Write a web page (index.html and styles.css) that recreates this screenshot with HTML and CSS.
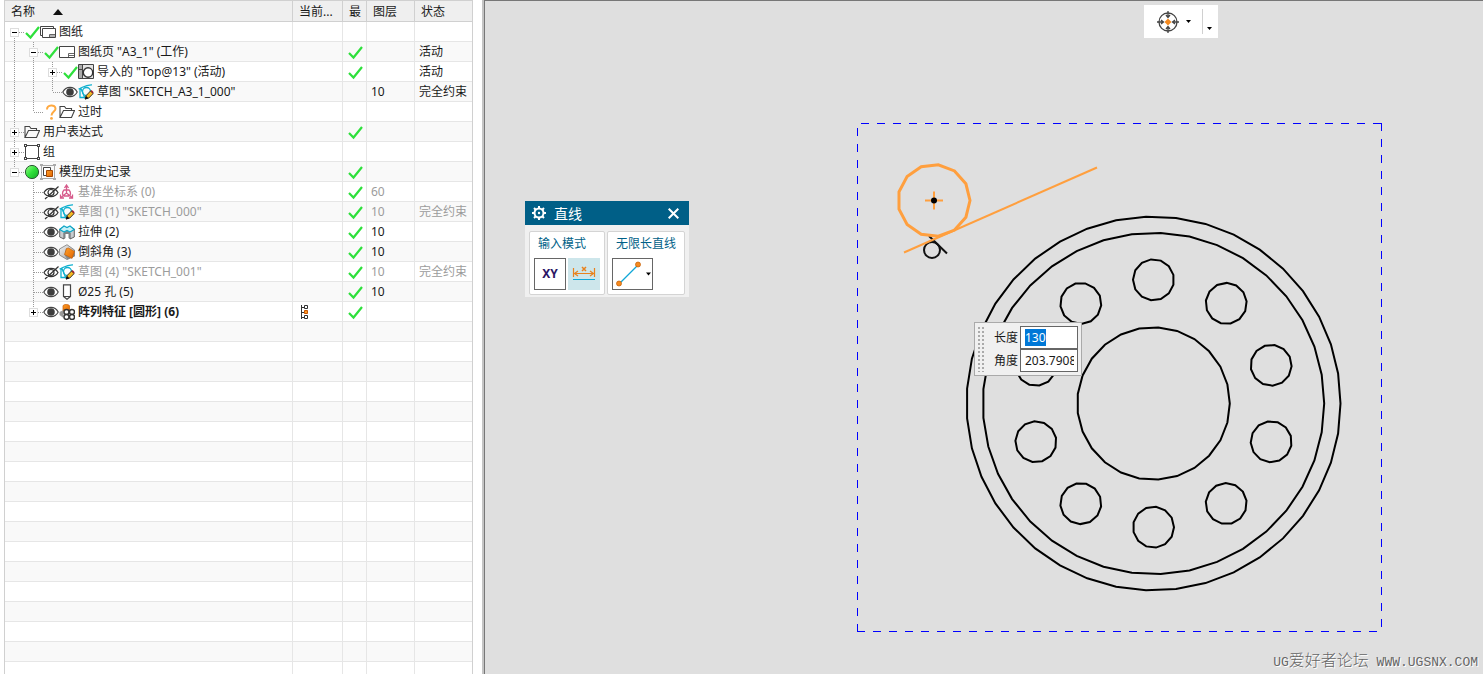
FILE: index.html
```html
<!DOCTYPE html>
<html lang="zh-CN">
<head>
<meta charset="utf-8">
<title>图纸</title>
<link rel="stylesheet" href="styles.css">
</head>
<body>
<svg class="defs" aria-hidden="true">
  <defs>
    <linearGradient id="gBall" x1="0" y1="0" x2="1" y2="1"><stop offset="0" stop-color="#9dff8c"/><stop offset=".5" stop-color="#2fe03a"/><stop offset="1" stop-color="#14a824"/></linearGradient>
    <linearGradient id="gOr" x1="0" y1="0" x2="1" y2="1"><stop offset="0" stop-color="#ffa02a"/><stop offset="1" stop-color="#e06400"/></linearGradient>
    <linearGradient id="gGr" x1="0" y1="0" x2="1" y2="1"><stop offset="0" stop-color="#f4f4f4"/><stop offset="1" stop-color="#9a9a9a"/></linearGradient>
  </defs>
  <symbol id="check" viewBox="0 0 16 16"><path d="M2 9l4.500 4.500L15 3" fill="none" stroke="#2ee03c" stroke-width="2.200"/></symbol>
  <symbol id="sheets" viewBox="0 0 16 16"><path d="M3 11.500H.5V2.500H13.500V4.500" fill="none" stroke="#444"/><path d="M2.500 4.500H15.500V13.500H2.500z" fill="#fff" stroke="#444"/><path d="M9.500 13V10.500H15M9.500 12H15" fill="none" stroke="#666"/></symbol>
  <symbol id="sheet" viewBox="0 0 16 16"><path d="M.5 2.500H15.500V13.500H.5z" fill="#fff" stroke="#444"/><path d="M9.500 13V9.500H15M9.500 11.500H15" fill="none" stroke="#666"/></symbol>
  <symbol id="view" viewBox="0 0 16 16"><path d="M.5 .5H15.500V14.500H.5z" fill="#e4e4e4" stroke="#444"/><path d="M1 1h3v13H1z" fill="#aaa"/><path d="M4.500 .5v14M1 5.500h3" stroke="#444"/><circle cx="10" cy="8.500" r="4.700" fill="#fff" stroke="#333" stroke-width="1.400"/></symbol>
  <symbol id="sketch" viewBox="0 0 16 16"><path d="M.5 5C4 4 7 .5 14 .8M2 4.500v9H9M2.500 3.500L6.500 13" fill="none" stroke="#0fb0cf" stroke-width="1.300"/><circle cx="8.500" cy="7.500" r="4" fill="none" stroke="#0fb0cf" stroke-width="1.300"/><path d="M7 15L8.200 11.500 12.500 7 15.200 9.500 10.800 14z" fill="#f6b821" stroke="#222" stroke-width=".9"/><path d="M7 15.500l1-3.500 2.500 2.300z" fill="#111"/><path d="M12.500 7l1-1 2.200 2.200-1 1.300z" fill="#9b1d2d"/></symbol>
  <symbol id="eye" viewBox="0 0 16 16"><path d="M.8 8C4 1.800 12 1.800 15.200 8 12 14.200 4 14.200 .8 8z" fill="#fff" stroke="#444" stroke-width="1.100"/><circle cx="8" cy="8" r="3.800" fill="#3d3d3d"/></symbol>
  <symbol id="hidden" viewBox="0 0 16 16"><path d="M1 8.500C4 3 12 3 15 8.500 12 14 4 14 1 8.500zM2 15L15.500 2.500" fill="none" stroke="#333" stroke-width="1.200"/><circle cx="8" cy="8.500" r="3" fill="none" stroke="#333" stroke-width="1.200"/></symbol>
  <symbol id="question" viewBox="0 0 16 16"><path d="M4 5.500C4 .2 12.500 .2 12.500 4.700 12.500 7.500 8.500 7.500 8.500 11.500" fill="none" stroke="#ffa940" stroke-width="2"/><circle cx="8.500" cy="14.400" r="1.400" fill="#ffa940"/></symbol>
  <symbol id="folder" viewBox="0 0 16 16"><path d="M1 13.500V2.500H5.500L7 4.500H12.500V6.500M1 13.500L4.500 6.500H15.500L12.500 13.500z" fill="none" stroke="#444" stroke-width="1.100"/></symbol>
  <symbol id="group" viewBox="0 0 16 16"><path d="M1.500 1.500h13v13h-13z" fill="none" stroke="#444"/><path d="M0 0h3v3H0zM13 0h3v3h-3zM0 13h3v3H0zM13 13h3v3h-3z" fill="#444"/><path d="M1 1h1v1H1zM14 1h1v1h-1zM1 14h1v1H1zM14 14h1v1h-1z" fill="#fff"/></symbol>
  <symbol id="ball" viewBox="0 0 16 16"><circle cx="8" cy="8" r="6.600" fill="url(#gBall)" stroke="#2c5a35"/></symbol>
  <symbol id="history" viewBox="0 0 16 16"><path d="M1.500 1.500h13v13h-13z" fill="none" stroke="#aaa"/><path d="M0 0h3v2H0zM13 0h3v2h-3zM0 14h3v2H0zM13 14h3v2h-3z" fill="#aaa"/><path d="M3.500 3.500h7v8h-7z" fill="#fff" stroke="#444"/><path d="M6.500 6.500h6v6h-6z" fill="url(#gOr)" stroke="#a84800"/></symbol>
  <symbol id="csys" viewBox="0 0 16 16"><path d="M7.500 1v8L2 13.500M7.500 9L13 13.500M5.500 4l2-3 2 3M1.500 10.500V14H5M10 14h3.500v-3.500M5 6c-2 2-2 5 0 6h5c2-1 2-4 0-6z" fill="none" stroke="#d65a8a" stroke-width="1.300"/></symbol>
  <symbol id="extrude" viewBox="0 0 16 16"><path d="M.7 5L5 3l3 1 3-1 4.300 2v8L11 15V9L8 8 5 9v6L.7 13z" fill="#c9cdd0" stroke="#555" stroke-width=".9"/><path d="M5 8.500l3-1.500 3 1.500V15l-1.500-1V10H6.500v4L5 15z" fill="#7f8588"/><path d="M.7 5.500L5 2l3 1.500L11 2l4.300 3.500L11 8 8 6.500 5 8z" fill="#c8f2f8" stroke="#10a7c7" stroke-width="1.300"/></symbol>
  <symbol id="chamfer" viewBox="0 0 16 16"><path d="M.5 5L8 .7l7.500 5.300v6L8 15.500.5 11z" fill="url(#gGr)" stroke="#777" stroke-width=".8"/><path d="M7 4.500L15.500 8v4.500L8.500 15.500 5.500 11z" fill="#888"/><path d="M7.500 4.500L9.500 4l6 3.500-2.500 7L5.500 10.500z" fill="url(#gOr)" stroke="#c35a00" stroke-width=".6"/></symbol>
  <symbol id="hole" viewBox="0 0 16 16"><path d="M4.500 .8h7V12.500L8 15.300 4.500 12.500zM4.500 12.500h7" fill="#fff" stroke="#444" stroke-width="1.200"/></symbol>
  <symbol id="pattern" viewBox="0 0 16 16"><path d="M4 2C4 0 10.500 0 10.500 2V7H4z" fill="url(#gOr)" stroke="#c35a00" stroke-width=".7"/><path d="M.5 8l4-2v8l-4-3z" fill="#999"/><g fill="#fff" stroke="#333" stroke-width="1.400"><circle cx="7.500" cy="8" r="2.500"/><circle cx="13" cy="8" r="2.500"/><circle cx="7.500" cy="13" r="2.500"/><circle cx="13" cy="13" r="2.500"/></g></symbol>
  <symbol id="branch" viewBox="0 0 16 16"><path d="M4.500 1v14M4 3.500h3M4 8.500h3M4 13.500h3" fill="none" stroke="#333"/><path d="M7.500 1.500h3v3h-3zM7.500 11.500h3v3h-3z" fill="#fff" stroke="#333"/><path d="M7.500 6.500h3v3h-3z" fill="#ff9a20" stroke="#c75300"/></symbol>
</svg>

<main class="app">
  <section class="navigator">
    <table class="tree">
      <colgroup><col><col class="c-current"><col class="c-latest"><col class="c-layer"><col class="c-state"></colgroup>
      <thead><tr><th>名称<svg class="sort" viewBox="0 0 10 6"><path d="M5 0l5 6H0z" fill="#111"/></svg></th><th>当前...</th><th>最</th><th>图层</th><th>状态</th></tr></thead>
      <tbody id="rows"></tbody>
    </table>
  </section>

  <section class="canvas">
    <svg class="drawing" width="998" height="673" aria-label="草图">
      <g class="frame"><path d="M376 122.500H897"/><path d="M372.500 127V630"/><path d="M896.500 122V630"/><path d="M372 630.500H897"/></g>
      <g id="plate" class="edges"></g>
      <g class="tangent"><circle cx="447" cy="249" r="8"/><path d="M444 235L462 252.500"/></g>
      <g id="active" class="active"><path d="M419 251.500L612 166.500"/><path d="M440 199.500h18M449 190.500v18"/></g>
      <circle cx="449" cy="199.500" r="3"/>
    </svg>

    <div class="snapbar">
      <button class="snap" aria-label="捕捉点">
        <svg width="24" height="24" viewBox="0 0 24 24"><g fill="none" stroke="#444" stroke-width="1.300"><circle cx="12" cy="12" r="9"/><path d="M12 1v6.500M12 16.500V23M1 12h6.500M16.500 12H23M10 5l2 2.500L14 5M10 19l2-2.500 2 2.500M5 10l2.500 2L5 14M19 10l-2.500 2 2.500 2"/></g><path d="M12 8.500l3.500 3.500-3.500 3.500L8.500 12z" fill="#f58a1f"/></svg>
        <svg width="5" height="3" viewBox="0 0 5 3"><path d="M0 0h5L2.500 3z"/></svg>
      </button>
      <button class="more" aria-label="更多"><svg width="5" height="3" viewBox="0 0 5 3"><path d="M0 0h5L2.500 3z"/></svg></button>
    </div>

    <div class="dialog">
      <header class="dialog-head">
        <svg width="14" height="14" viewBox="0 0 14 14"><circle cx="7" cy="7" r="4.500" fill="none" stroke="#fff" stroke-width="2"/><circle cx="7" cy="7" r="1.200" fill="#fff"/><path d="M7 0v2M7 12v2M0 7h2M12 7h2M2 2l1.500 1.500M10.500 10.500L12 12M2 12l1.500-1.500M10.500 3.500L12 2" stroke="#fff" stroke-width="2"/></svg>
        <span>直线</span>
        <button class="close" aria-label="关闭"><svg width="11" height="11" viewBox="0 0 11 11"><path d="M.7.700l9.600 9.600M10.300.700L.7 10.300" stroke="#fff" stroke-width="2"/></svg></button>
      </header>
      <div class="dialog-body">
        <div class="box"><h2>输入模式</h2>
          <div class="tools">
            <button class="tool xy">XY</button>
            <button class="tool on" aria-label="参数模式"><svg width="24" height="16" viewBox="0 0 24 16"><path d="M1.500 2v9M22.500 2v9M2 7.500h20M6 5L2.500 7.500 6 10M18 5l3.500 2.500L18 10" fill="none" stroke="#e8821e" stroke-width="1.200"/><path d="M10 1l4 4M14 1l-4 4" stroke="#e8821e" stroke-width="1.500"/><path d="M1 13.500h22" stroke="#10a7d7"/></svg></button>
          </div>
        </div>
        <div class="box"><h2>无限长直线</h2>
          <div class="tools">
            <button class="tool wide" aria-label="直线"><svg width="38" height="28" viewBox="0 0 38 28"><path d="M5 24L24 5" stroke="#10a7d7" stroke-width="1.300"/><circle cx="5" cy="23.500" r="2.500" fill="#f58a1f" stroke="#c35a00" stroke-width=".7"/><circle cx="24" cy="4.500" r="2.500" fill="#f58a1f" stroke="#c35a00" stroke-width=".7"/><path d="M32 12.500h5L34.500 15.500z"/></svg></button>
          </div>
        </div>
      </div>
    </div>

    <form class="dims">
      <span class="grip"></span>
      <label for="len">长度</label><input id="len" value="130">
      <label for="ang">角度</label><input id="ang" value="203.7908">
    </form>

    <div class="mark"><span class="mono">UG</span>爱好者论坛<span class="mono"> WWW.UGSNX.COM</span></div>
  </section>
</main>
<script src="app.js"></script>
</body>
</html>
```
FILE: styles.css
```css
* { box-sizing: border-box; }
body { margin: 0; background: #fff; color: #1a1a1a; font: 12px/16px "Noto Sans", "Noto Sans CJK SC", sans-serif; }
button, input { font: inherit; color: inherit; margin: 0; padding: 0; border-radius: 0; }
button { border: 0; background: none; }
svg { display: block; flex: none; }
.defs { position: absolute; width: 0; height: 0; }
.app { display: flex; height: 100vh; overflow: hidden; }

.navigator { flex: 0 0 469px; margin: 0 9px 0 4px; overflow: hidden; border: solid #d0d0d0; border-width: 0 1px; }
.tree { width: 100%; table-layout: fixed; border-collapse: separate; border-spacing: 0; }
.c-current { width: 50px; }
.c-latest { width: 24px; }
.c-layer { width: 48px; }
.c-state { width: 57px; }
th { height: 22px; padding: 2px 0 0 6px; background: #efefef; border: solid #d0d0d0; border-width: 1px 1px 1px 0; font-weight: 400; text-align: left; white-space: nowrap; overflow: hidden; }
th:last-child, td:last-child { border-right: 0; }
td { height: 20px; padding: 0 0 0 4px; border: solid #e6e6e6; border-width: 0 1px 1px 0; white-space: nowrap; }
td:first-child { padding: 0; }
tr:nth-child(even) td { background: #f9f9f9; }
.sort { display: inline-block; width: 10px; height: 6px; margin-left: 18px; vertical-align: 1px; }
.name { display: flex; align-items: center; height: 19px; }
.text { margin-left: 3px; }
.bold .text { font-weight: 700; }
.dim { color: #9c9c9c; }
.guide { position: relative; flex: 0 0 19px; height: 20px; }
.guide path { stroke: #999; stroke-dasharray: 1 1; fill: none; }
.toggle { position: absolute; left: 5px; top: 6px; width: 9px; height: 9px; background: #fff; border: 1px solid #ddd; display: grid; place-items: center; }
.toggle path { stroke: #000; stroke-dasharray: none; }

.canvas { position: relative; flex: 1; min-width: 0; background: #dfdfdf; border: solid #777; border-width: 1px 0 0 1px; box-shadow: -2px 0 #c4c4c4; margin-left: 2px; overflow: hidden; }
.drawing { position: absolute; left: 0; top: 0; overflow: visible; }
.frame path { stroke: #00f; stroke-dasharray: 8 8; }
.edges { fill: none; stroke: #000; stroke-width: 2; }
.active { fill: none; stroke: #ff9f3e; stroke-width: 2; }
.active polygon { stroke-width: 3; }
.tangent { fill: none; stroke: #111; stroke-width: 2; }

.snapbar { position: absolute; left: 659px; top: 4px; display: flex; height: 33px; padding: 4px 0; background: #fff; }
.snap { display: flex; align-items: center; gap: 6px; padding: 0 11px 0 12px; border-right: 1px solid #d0d0d0; }
.more { display: flex; align-items: flex-end; padding: 0 6px 4px 4px; }

.dialog { position: absolute; left: 40px; top: 200px; width: 164px; background: #f0f0f0; }
.dialog-head { display: flex; align-items: center; gap: 8px; height: 24px; padding: 0 10px 0 7px; background: #005f87; color: #fff; font-size: 14px; }
.dialog-head span { padding-top: 2px; }
.close { margin-left: auto; }
.dialog-body { display: flex; gap: 2px; padding: 6px 4px 2px; }
.box { flex: 1 0 auto; padding: 4px; background: #fff; border: 1px solid #d4d4d4; border-radius: 2px; }
.box h2 { margin: 0 0 6px; padding: 0 4px; font-size: 12px; line-height: 16px; font-weight: 400; color: #005f87; }
.tools { display: flex; gap: 2px; }
.tool { display: grid; place-items: center; width: 32px; height: 32px; border: 1px solid #666; background: #fff; }
.xy { color: #2b1464; font-weight: 700; }
.on { border: 0; background: #cde6eb; }
.wide { width: 41px; }

.dims { position: absolute; left: 489px; top: 321px; display: grid; grid-template-columns: 8px 27px 58px; column-gap: 4px; align-items: center; padding: 3px 3px 3px 2px; background: #f0f0f0; border: 1px solid #aaa; }
.grip { grid-row: 1 / 3; align-self: stretch; background: radial-gradient(circle, #aaa 1px, transparent 1px) 0 0 / 4px 4px; }
.dims label { text-align: right; margin-right: -2px; }
.dims input { width: 58px; height: 23px; padding: 0 3px 0 4px; border: 1px solid #666; background: #fff; outline: 0; }
.dims input::selection { background: #0078d7; color: #fff; }

.mark { position: absolute; right: 5px; bottom: 2px; font-size: 16px; line-height: 18px; color: #666; font-weight: 300; text-shadow: 1px 1px #fff; white-space: pre; }
.mono { font-family: "Liberation Mono", monospace; font-size: 13px; }
```
FILE: app.js
```js
const rows = [
  [["f-"], "check sheets", "图纸"],
  [["v", "t-"], "check sheet", '图纸页 "A3_1" (工作)', 1, "", "活动"],
  [["v", "v", "t+"], "check view", '导入的 "Top@13" (活动)', 1, "", "活动"],
  [["v", "v", "l"], "eye sketch", '草图 "SKETCH_A3_1_000"', 0, "10", "完全约束"],
  [["v", "l"], "question folder", "过时"],
  [["t+"], "folder", "用户表达式", 1],
  [["t+"], "group", "组"],
  [["l-"], "ball history", "模型历史记录", 1],
  [["", "t"], "hidden csys", "基准坐标系 (0)", 1, "60", "", "dim"],
  [["", "t"], "hidden sketch", '草图 (1) "SKETCH_000"', 1, "10", "完全约束", "dim"],
  [["", "t"], "eye extrude", "拉伸 (2)", 1, "10"],
  [["", "t"], "eye chamfer", "倒斜角 (3)", 1, "10"],
  [["", "t"], "hidden sketch", '草图 (4) "SKETCH_001"', 1, "10", "完全约束", "dim"],
  [["", "t"], "eye hole", "Ø25 孔 (5)", 1, "10"],
  [["", "l+"], "eye pattern", "阵列特征 [圆形] (6)", 1, "", "", "bold"]
];
const lines = { f: "M9.5 10V20M10 10.500H19", v: "M9.500 0V20", t: "M9.500 0V20M10 10.500H19", l: "M9.500 0V10M10 10.500H19" };
const icon = id => `<svg width="16" height="16"><use href="#${id}"/></svg>`;
const guide = g => {
  const line = g ? `<svg width="19" height="20"><path d="${lines[g[0]]}"/></svg>` : "";
  const box = g[1] ? `<button class="toggle" aria-label="展开或折叠"><svg width="5" height="5"><path d="M0 2.500H5${g[1] === "+" ? "M2.500 0V5" : ""}"/></svg></button>` : "";
  return `<span class="guide">${line}${box}</span>`;
};
let html = rows.map(([guides, icons, text, latest, layer = "", state = "", kind = ""]) =>
  `<tr class="${kind}"><td><div class="name">${guides.map(guide).join("")}${icons.split(" ").map(icon).join("")}<span class="text">${text}</span></div></td>` +
  `<td>${kind === "bold" ? icon("branch") : ""}</td><td>${latest ? icon("check") : ""}</td><td>${layer}</td><td>${state}</td></tr>`
).join("");
html += "<tr><td></td><td></td><td></td><td></td><td></td></tr>".repeat(40);
document.getElementById("rows").innerHTML = html;

const polygon = (cx, cy, r, sides, start = 0) => {
  const points = Array.from({ length: sides }, (_, i) => {
    const a = (start + i * 360 / sides) * Math.PI / 180;
    return `${(cx + r * Math.cos(a)).toFixed(1)},${(cy + r * Math.sin(a)).toFixed(1)}`;
  });
  return `<polygon points="${points.join(" ")}"/>`;
};
const cx = 668.5, cy = 402.5;
let plate = polygon(cx, cy, 187, 39) + polygon(cx, cy, 170.7, 37) + polygon(cx, cy, 76.3, 25);
for (let i = 0; i < 10; i++) {
  const a = -90 + i * 36, t = a * Math.PI / 180;
  plate += polygon(cx + 123.7 * Math.cos(t), cy + 123.7 * Math.sin(t), 20.5, 13, a - 90);
}
document.getElementById("plate").innerHTML = plate;
document.getElementById("active").insertAdjacentHTML("beforeend", polygon(449, 199.5, 36, 13));

const len = document.getElementById("len");
len.focus();
len.select();
```
